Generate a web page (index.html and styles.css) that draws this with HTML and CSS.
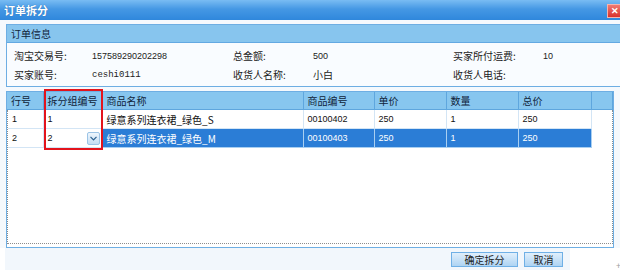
FILE: index.html
```html
<!DOCTYPE html>
<html lang="zh-CN">
<head>
    <meta charset="UTF-8">
    <title>订单拆分</title>
    <link rel="stylesheet" href="styles.css">
</head>
<body>
    <div class="dialog">
        <div class="titlebar">
            <span class="title">订单拆分</span>
            <span class="close">✕</span>
        </div>

        <div class="content">
            <div class="panel">
                <div class="panel-head">订单信息</div>
                <div class="info">
                    <span class="label">淘宝交易号:</span>
                    <span class="value num">157589290202298</span>
                    <span class="label">总金额:</span>
                    <span class="value num">500</span>
                    <span class="label">买家所付运费:</span>
                    <span class="value num">10</span>

                    <span class="label">买家账号:</span>
                    <span class="value mono">ceshi0111</span>
                    <span class="label">收货人名称:</span>
                    <span class="value">小白</span>
                    <span class="label">收货人电话:</span>
                    <span class="value"></span>
                </div>
            </div>

            <div class="grid">
                <table class="grid-head">
                    <colgroup>
                        <col style="width:36px"><col style="width:59px"><col style="width:201px">
                        <col style="width:71px"><col style="width:72px"><col style="width:72px">
                        <col style="width:73px"><col>
                    </colgroup>
                    <tr>
                        <th>行号</th>
                        <th>拆分组编号</th>
                        <th>商品名称</th>
                        <th>商品编号</th>
                        <th>单价</th>
                        <th>数量</th>
                        <th>总价</th>
                        <th></th>
                    </tr>
                </table>
                <div class="grid-body">
                    <table class="rows">
                        <colgroup>
                            <col style="width:35px"><col style="width:59px"><col style="width:201px">
                            <col style="width:71px"><col style="width:72px"><col style="width:72px">
                            <col style="width:73px">
                        </colgroup>
                        <tr>
                            <td class="num">1</td>
                            <td class="num">1</td>
                            <td>绿意系列连衣裙_绿色_S</td>
                            <td class="num">00100402</td>
                            <td class="num">250</td>
                            <td class="num">1</td>
                            <td class="num">250</td>
                        </tr>
                        <tr class="selected">
                            <td class="num">2</td>
                            <td class="num editing">
                                <div class="combo">
                                    <span>2</span>
                                    <span class="combo-btn">
                                        <svg width="7" height="5" viewBox="0 0 7 5"><path d="M0.5 0.8 L3.5 3.8 L6.5 0.8" fill="none" stroke="#2c5f8e" stroke-width="1.2"/></svg>
                                    </span>
                                </div>
                            </td>
                            <td class="sel">绿意系列连衣裙_绿色_M</td>
                            <td class="sel num">00100403</td>
                            <td class="sel num">250</td>
                            <td class="sel num">1</td>
                            <td class="sel num">250</td>
                        </tr>
                    </table>
                </div>
                <div class="mark"></div>
            </div>
        </div>

        <div class="footer-row">
            <div class="footer">
                <button class="btn">确定拆分</button>
                <button class="btn">取消</button>
            </div>
            <span class="grip">+</span>
        </div>
    </div>
</body>
</html>
```

FILE: styles.css
```css
body {
    margin: 0;
    background: #fff;
    font-family: "Noto Sans CJK SC", "Liberation Sans", sans-serif;
    font-size: 10px;
    color: #111;
}

.dialog {
    width: 620px;
    height: 276px;
    overflow: hidden;
}

.titlebar {
    height: 20px;
    display: flex;
    align-items: center;
    justify-content: space-between;
    background: linear-gradient(#79bcf3, #4598e4 45%, #2f87dc);
}

.title {
    padding-left: 4px;
    color: #fff;
    font-size: 11px;
    font-weight: bold;
    text-shadow: 0 0 1px #1b5fa6;
}

.close {
    width: 13px;
    height: 12px;
    margin-top: 1px;
    margin-right: -2px;
    display: flex;
    align-items: center;
    justify-content: center;
    background: linear-gradient(#f07a72, #d8322c);
    border: 1px solid #f3b4ae;
    color: #fff;
    font-size: 9px;
    font-weight: bold;
    line-height: 1;
}

.content {
    background: #f5f9fd;
    padding: 4px 0 0 6px;
}

.panel {
    width: 620px;
    border: 1px solid #6eaee3;
    background: #f9fcff;
}

.panel-head {
    height: 17px;
    line-height: 17px;
    padding-left: 4px;
    background: #87c5ee;
    border-bottom: 1px solid #63a9e2;
    color: #10243a;
}

.info {
    display: grid;
    grid-template-columns: 78px 141px 80px 140px 90px 1fr;
    grid-auto-rows: 19px;
    align-items: center;
    padding: 3px 0 2px 7px;
    color: #222;
}

.num {
    font-family: "Liberation Sans", sans-serif;
    font-size: 9px;
}

.mono {
    font-family: "Liberation Mono", monospace;
    font-size: 9px;
}

.grid {
    position: relative;
    width: 606px;
    margin-top: 4px;
    border: 1px solid #6eaee3;
    background: #fff;
    padding-bottom: 3px;
}

.grid table {
    border-collapse: collapse;
    table-layout: fixed;
}

.grid-head {
    width: 606px;
}

.grid-head th {
    height: 17px;
    padding: 0 0 0 4px;
    text-align: left;
    font-weight: normal;
    background: #87c6ef;
    border-right: 1px solid #5ea6de;
    border-bottom: 1px solid #5ea6de;
    color: #10243a;
    white-space: nowrap;
    overflow: hidden;
}

.grid-body {
    height: 133px;
    border: 1px dotted #8d8d8d;
    border-top: none;
}

.rows {
    width: 583px;
}

.rows td {
    height: 18px;
    padding: 0 0 0 4px;
    border-right: 1px solid #d3e5f5;
    border-bottom: 1px solid #d3e5f5;
    white-space: nowrap;
    overflow: hidden;
}

.rows td.sel {
    background: #2b7dd6;
    color: #fff;
    border-right-color: #a9cff1;
    border-bottom-color: #a9cff1;
}

.combo {
    display: flex;
    align-items: center;
    justify-content: space-between;
    padding-right: 2px;
}

.combo-btn {
    width: 13px;
    height: 13px;
    display: flex;
    align-items: center;
    justify-content: center;
    box-sizing: border-box;
    border: 1px solid #9cc4e6;
    border-radius: 2px;
    background: linear-gradient(#eef6fd, #c4def4);
}

.mark {
    position: absolute;
    left: 37px;
    top: -3px;
    width: 59px;
    height: 61px;
    box-sizing: border-box;
    border: 2px solid #e3141c;
}

.footer-row {
    display: flex;
    align-items: flex-end;
}

.footer {
    width: 565px;
    height: 22px;
    margin-left: 5px;
    display: flex;
    align-items: center;
    justify-content: flex-end;
    gap: 6px;
    padding-right: 7px;
    box-sizing: border-box;
    background: #f2f7fc;
}

.btn {
    height: 15px;
    padding: 0;
    margin: 0;
    border: 1px solid #6fb0e6;
    background: linear-gradient(#e0effc, #aed4f3);
    font-family: "Noto Sans CJK SC", sans-serif;
    font-size: 10px;
    line-height: 13px;
    color: #1b1b1b;
}

.btn:first-child {
    width: 67px;
}

.btn:last-child {
    width: 39px;
}

.grip {
    margin-left: auto;
    margin-right: -1px;
    color: #a0a0a0;
    font-size: 9px;
    line-height: 9px;
}
```
